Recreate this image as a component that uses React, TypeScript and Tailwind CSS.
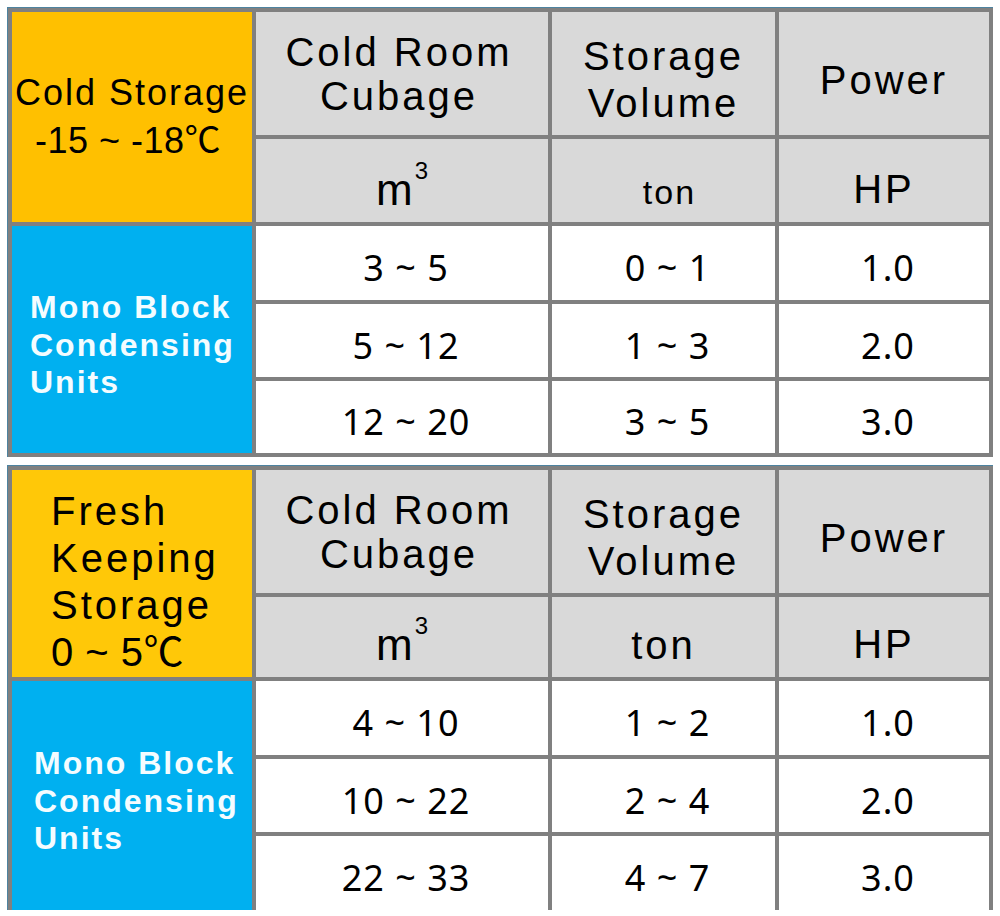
import React from "react";

type Row = [string, string, string];

function HeaderRow1() {
  return (
    <>
      <div className="bg-[#d9d9d9] flex items-center justify-center text-center font-['Liberation_Sans',Arial,sans-serif] text-[40px] leading-[44px] tracking-[3px] text-black pr-[6px]">
        <div>
          Cold Room
          <br />
          Cubage
        </div>
      </div>
      <div className="bg-[#d9d9d9] flex items-center justify-center text-center font-['Liberation_Sans',Arial,sans-serif] text-[40px] leading-[47px] tracking-[3px] text-black pt-[12px]">
        <div>
          Storage
          <br />
          Volume
        </div>
      </div>
      <div className="bg-[#d9d9d9] flex items-center justify-center text-center font-['Liberation_Sans',Arial,sans-serif] text-[40px] leading-[46px] tracking-[3px] text-black pt-[12px]">
        Power
      </div>
    </>
  );
}

function HeaderRow2({ small }: { small: boolean }) {
  return (
    <>
      <div className="bg-[#d9d9d9] flex items-end justify-center pb-[12px] text-black font-['Liberation_Sans',Arial,sans-serif]">
        <span className="text-[44px] leading-[40px]">
          m<span className="text-[24px] align-[26px] ml-[2px]">3</span>
        </span>
      </div>
      <div className="bg-[#d9d9d9] flex items-end justify-center text-black font-['Liberation_Sans',Arial,sans-serif]">
        {small ? (
          <span className="text-[34px] leading-[40px] tracking-[2px] pb-[10px] pl-[12px]">ton</span>
        ) : (
          <span className="text-[40px] leading-[40px] tracking-[3px] pb-[12px]">ton</span>
        )}
      </div>
      <div className="bg-[#d9d9d9] flex items-end justify-center pb-[13px] text-black font-['Liberation_Sans',Arial,sans-serif]">
        <span className="text-[40px] leading-[40px] tracking-[3px]">HP</span>
      </div>
    </>
  );
}

function DataCells({ row }: { row: Row }) {
  return (
    <>
      {row.map((v, i) => (
        <div
          key={i}
          className="bg-white flex items-center justify-center pt-[10px] pl-[8px] text-black font-['Noto_Sans','Open_Sans',sans-serif]"
        >
          <span className="text-[36px] leading-[40px] tracking-[1px] whitespace-pre">{v}</span>
        </div>
      ))}
    </>
  );
}

function BlueCell({ second }: { second: boolean }) {
  return (
    <div
      className={
        second
          ? "row-span-3 bg-[#00b0f0] flex items-center pt-[12px] pl-[22px] text-[#f4fcff] font-bold font-['Liberation_Sans',Arial,sans-serif] text-[32px] leading-[37.5px] tracking-[2px]"
          : "row-span-3 bg-[#00b0f0] flex items-center pt-[12px] pl-[18px] text-[#f4fcff] font-bold font-['Liberation_Sans',Arial,sans-serif] text-[32px] leading-[37.5px] tracking-[2px]"
      }
    >
      <div>
        Mono Block
        <br />
        Condensing
        <br />
        Units
      </div>
    </div>
  );
}

const rows1: Row[] = [
  ["3 ~ 5", "0 ~ 1", "1.0"],
  ["5 ~ 12", "1 ~ 3", "2.0"],
  ["12 ~ 20", "3 ~ 5", "3.0"],
];

const rows2: Row[] = [
  ["4 ~ 10", "1 ~ 2", "1.0"],
  ["10 ~ 22", "2 ~ 4", "2.0"],
  ["22 ~ 33", "4 ~ 7", "3.0"],
];

export default function App() {
  return (
    <div className="w-[1000px] h-[916px] bg-white overflow-hidden pt-[7px] pl-[7px] flex flex-col items-start gap-[8px]">
      {/* Table 1 */}
      <div className="grid grid-cols-[240px_292px_223px_210px] grid-rows-[123px_83px_74px_73px_72px] gap-[4px] p-[4px] bg-[#808080] border-t border-l border-[#4d83a0]">
        <div className="row-span-2 bg-[#ffc000] flex items-center justify-center text-center font-['Liberation_Sans',Arial,'Noto_Sans_CJK_SC',sans-serif] text-[36px] leading-[48px] text-black">
          <div>
            <div className="tracking-[2px]">Cold Storage</div>
            <div className="tracking-[0.5px] pr-[8px]">-15 ~ -18℃</div>
          </div>
        </div>
        <HeaderRow1 />
        <HeaderRow2 small />
        <BlueCell second={false} />
        <DataCells row={rows1[0]} />
        <DataCells row={rows1[1]} />
        <DataCells row={rows1[2]} />
      </div>

      {/* Table 2 */}
      <div className="grid grid-cols-[240px_292px_223px_210px] grid-rows-[123px_80px_74px_73px_74px] gap-[4px] pt-[4px] px-[4px] bg-[#808080] border-t border-l border-[#4d83a0]">
        <div className="row-span-2 bg-[#ffc808] flex items-start pt-[18px] pl-[39px] font-['Liberation_Sans',Arial,'Noto_Sans_CJK_SC',sans-serif] text-[40px] leading-[47px] text-black">
          <div>
            <div className="tracking-[3px]">Fresh</div>
            <div className="tracking-[3px]">Keeping</div>
            <div className="tracking-[3px]">Storage</div>
            <div className="tracking-[0.5px]">0 ~ 5℃</div>
          </div>
        </div>
        <HeaderRow1 />
        <HeaderRow2 small={false} />
        <BlueCell second />
        <DataCells row={rows2[0]} />
        <DataCells row={rows2[1]} />
        <DataCells row={rows2[2]} />
      </div>
    </div>
  );
}
